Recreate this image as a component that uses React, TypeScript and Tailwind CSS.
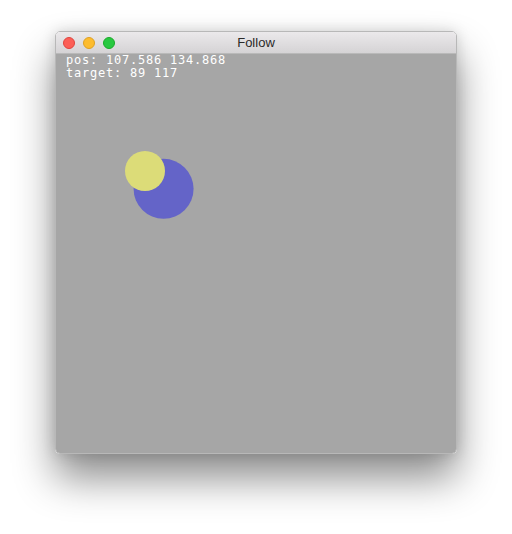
export default function App() {
  const pos = { x: 107.586, y: 134.868 };
  const target = { x: 89, y: 117 };

  return (
    <div className="w-[512px] h-[534px] bg-white flex justify-center pt-[31px]">
      <div className="w-[402px] h-[423px] flex flex-col rounded-[5px] overflow-hidden border border-[#b8b8b8] shadow-[0_24px_40px_rgba(0,0,0,0.45),0_0_14px_rgba(0,0,0,0.15)]">
        <div className="h-[22px] shrink-0 relative flex items-center justify-center bg-gradient-to-b from-[#ebe9eb] to-[#d5d3d5] border-b border-[#b9b9b9]">
          <div className="absolute left-[7px] top-[5px] flex gap-2">
            <span className="w-3 h-3 rounded-full bg-[#fc5f57] border border-[#e0443e]" />
            <span className="w-3 h-3 rounded-full bg-[#fdbc2e] border border-[#dea123]" />
            <span className="w-3 h-3 rounded-full bg-[#28c840] border border-[#1aab29]" />
          </div>
          <span className="pt-px text-[13px] text-[#2a2a2a] font-['Helvetica','Liberation_Sans',sans-serif]">Follow</span>
        </div>
        <div className="relative flex-1 bg-[#a6a6a6]">
          <div className="pl-[10px] text-white text-[12px] tracking-[0.78px] leading-[13px] font-['DejaVu_Sans_Mono',monospace] whitespace-pre">
            <div>pos: {pos.x} {pos.y}</div>
            <div>target: {target.x} {target.y}</div>
          </div>
          <svg className="absolute left-0 top-0" width="400" height="400">
            <circle cx={pos.x} cy={pos.y} r="30" fill="#6464c8" />
            <circle cx={target.x} cy={target.y} r="20" fill="#dcdc78" />
          </svg>
        </div>
      </div>
    </div>
  );
}
